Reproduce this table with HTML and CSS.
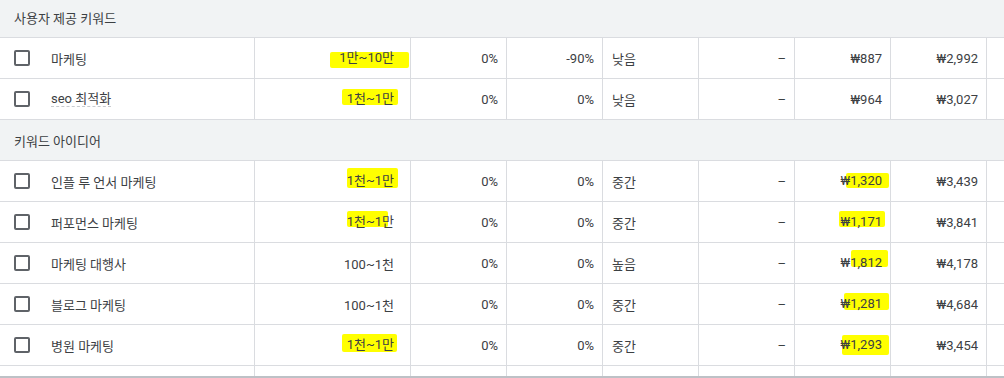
FILE: index.html
```html
<!DOCTYPE html>
<html lang="ko">
<head>
<meta charset="utf-8">
<title>키워드</title>
<link rel="stylesheet" href="styles.css">
</head>
<body>
<div class="viewport">
  <div class="table">
    <div class="group">사용자 제공 키워드</div>

    <div class="row">
      <div class="cell kw"><span class="cb"></span><span class="kw-text">마케팅</span></div>
      <div class="cell num vol"><mark class="hl h1">1만~10만</mark></div>
      <div class="cell num">0%</div>
      <div class="cell num">-90%</div>
      <div class="cell txt">낮음</div>
      <div class="cell num">–</div>
      <div class="cell num">₩887</div>
      <div class="cell num">₩2,992</div>
      <div class="cell last"></div>
    </div>

    <div class="row">
      <div class="cell kw"><span class="cb"></span><span class="kw-text dotted">seo 최적화</span></div>
      <div class="cell num vol"><mark class="hl h2">1천~1만</mark></div>
      <div class="cell num">0%</div>
      <div class="cell num">0%</div>
      <div class="cell txt">낮음</div>
      <div class="cell num">–</div>
      <div class="cell num">₩964</div>
      <div class="cell num">₩3,027</div>
      <div class="cell last"></div>
    </div>

    <div class="group">키워드 아이디어</div>

    <div class="row">
      <div class="cell kw"><span class="cb"></span><span class="kw-text">인플 루 언서 마케팅</span></div>
      <div class="cell num vol"><mark class="hl h3">1천~1만</mark></div>
      <div class="cell num">0%</div>
      <div class="cell num">0%</div>
      <div class="cell txt">중간</div>
      <div class="cell num">–</div>
      <div class="cell num"><mark class="hl w1">₩1,320</mark></div>
      <div class="cell num">₩3,439</div>
      <div class="cell last"></div>
    </div>

    <div class="row">
      <div class="cell kw"><span class="cb"></span><span class="kw-text">퍼포먼스 마케팅</span></div>
      <div class="cell num vol"><mark class="hl h4">1천~1만</mark></div>
      <div class="cell num">0%</div>
      <div class="cell num">0%</div>
      <div class="cell txt">중간</div>
      <div class="cell num">–</div>
      <div class="cell num"><mark class="hl w2">₩1,171</mark></div>
      <div class="cell num">₩3,841</div>
      <div class="cell last"></div>
    </div>

    <div class="row">
      <div class="cell kw"><span class="cb"></span><span class="kw-text">마케팅 대행사</span></div>
      <div class="cell num vol">100~1천</div>
      <div class="cell num">0%</div>
      <div class="cell num">0%</div>
      <div class="cell txt">높음</div>
      <div class="cell num">–</div>
      <div class="cell num"><mark class="hl w3">₩1,812</mark></div>
      <div class="cell num">₩4,178</div>
      <div class="cell last"></div>
    </div>

    <div class="row">
      <div class="cell kw"><span class="cb"></span><span class="kw-text">블로그 마케팅</span></div>
      <div class="cell num vol">100~1천</div>
      <div class="cell num">0%</div>
      <div class="cell num">0%</div>
      <div class="cell txt">중간</div>
      <div class="cell num">–</div>
      <div class="cell num"><mark class="hl w4">₩1,281</mark></div>
      <div class="cell num">₩4,684</div>
      <div class="cell last"></div>
    </div>

    <div class="row">
      <div class="cell kw"><span class="cb"></span><span class="kw-text">병원 마케팅</span></div>
      <div class="cell num vol"><mark class="hl h5">1천~1만</mark></div>
      <div class="cell num">0%</div>
      <div class="cell num">0%</div>
      <div class="cell txt">중간</div>
      <div class="cell num">–</div>
      <div class="cell num"><mark class="hl w5">₩1,293</mark></div>
      <div class="cell num">₩3,454</div>
      <div class="cell last"></div>
    </div>

    <div class="row">
      <div class="cell kw"></div>
      <div class="cell num vol"></div>
      <div class="cell num"></div>
      <div class="cell num"></div>
      <div class="cell txt"></div>
      <div class="cell num"></div>
      <div class="cell num"></div>
      <div class="cell num"></div>
      <div class="cell last"></div>
    </div>
  </div>
</div>
</body>
</html>
```

FILE: styles.css
```css
* { box-sizing: border-box; }

html, body {
  margin: 0;
  padding: 0;
  background: #ffffff;
}

body {
  font-family: "Roboto", "Noto Sans CJK KR", sans-serif;
  font-size: 13px;
  color: #3c4043;
}

.viewport {
  height: 378px;
  overflow: hidden;
  border-bottom: 2px solid #bdc1c6;
}

.table {
  margin-top: -3px;
}

.group {
  height: 41px;
  display: flex;
  align-items: center;
  padding-left: 14px;
  background: #f1f3f4;
  border-bottom: 1px solid #dadce0;
}

.row {
  height: 41px;
  display: grid;
  grid-template-columns: 255px 156px 96px 96px 96px 96px 96px 96px 1fr;
  border-bottom: 1px solid #dadce0;
  background: #ffffff;
}

.cell {
  display: flex;
  align-items: center;
  border-right: 1px solid #dadce0;
  white-space: nowrap;
}

.cell.last { border-right: none; }

.kw { padding-left: 14px; }

.cb {
  width: 16px;
  height: 16px;
  border: 2px solid #5f6368;
  border-radius: 2px;
  flex: none;
}

.kw-text {
  margin-left: 21px;
}

.dotted {
  border-bottom: 1px dashed #c8cbcf;
  line-height: 15px;
}

.num {
  justify-content: flex-end;
  padding-right: 8px;
}

.vol { padding-right: 16px; }

.txt { padding-left: 9px; }

.hl {
  position: relative;
  z-index: 0;
  display: inline-block;
  line-height: 16px;
  background: transparent;
  color: inherit;
  --t: -3px;
  --r: -4px;
  --b: -3px;
  --l: -4px;
}

.hl::before {
  content: "";
  position: absolute;
  z-index: -1;
  top: var(--t);
  right: var(--r);
  bottom: var(--b);
  left: var(--l);
  background: #ffff00;
  border-radius: 2px;
}

.h1 { --t: 2px;  --r: -15px; --b: -2px; --l: -9px; }
.h2 { --t: -2px; --r: -4px;  --b: 2px;  --l: -5px; }
.h3 { --t: -5px; --r: -4px;  --b: 1px;  --l: 0px; }
.h4 { --t: -3px; --r: 6px;   --b: 3px;  --l: 0px; }
.h5 { --t: -3px; --r: -3px;  --b: 1px;  --l: -5px; }

.w1 { --t: 0px;  --r: -7px;  --b: 1px;  --l: 5px; }
.w2 { --t: -3px; --r: -3px;  --b: 3px;  --l: -2px; }
.w3 { --t: -5px; --r: -6px;  --b: 4px;  --l: 10px; }
.w4 { --t: -3px; --r: -7px;  --b: 2px;  --l: 3px; }
.w5 { --t: -2px; --r: -7px;  --b: -2px; --l: 1px; }
```
